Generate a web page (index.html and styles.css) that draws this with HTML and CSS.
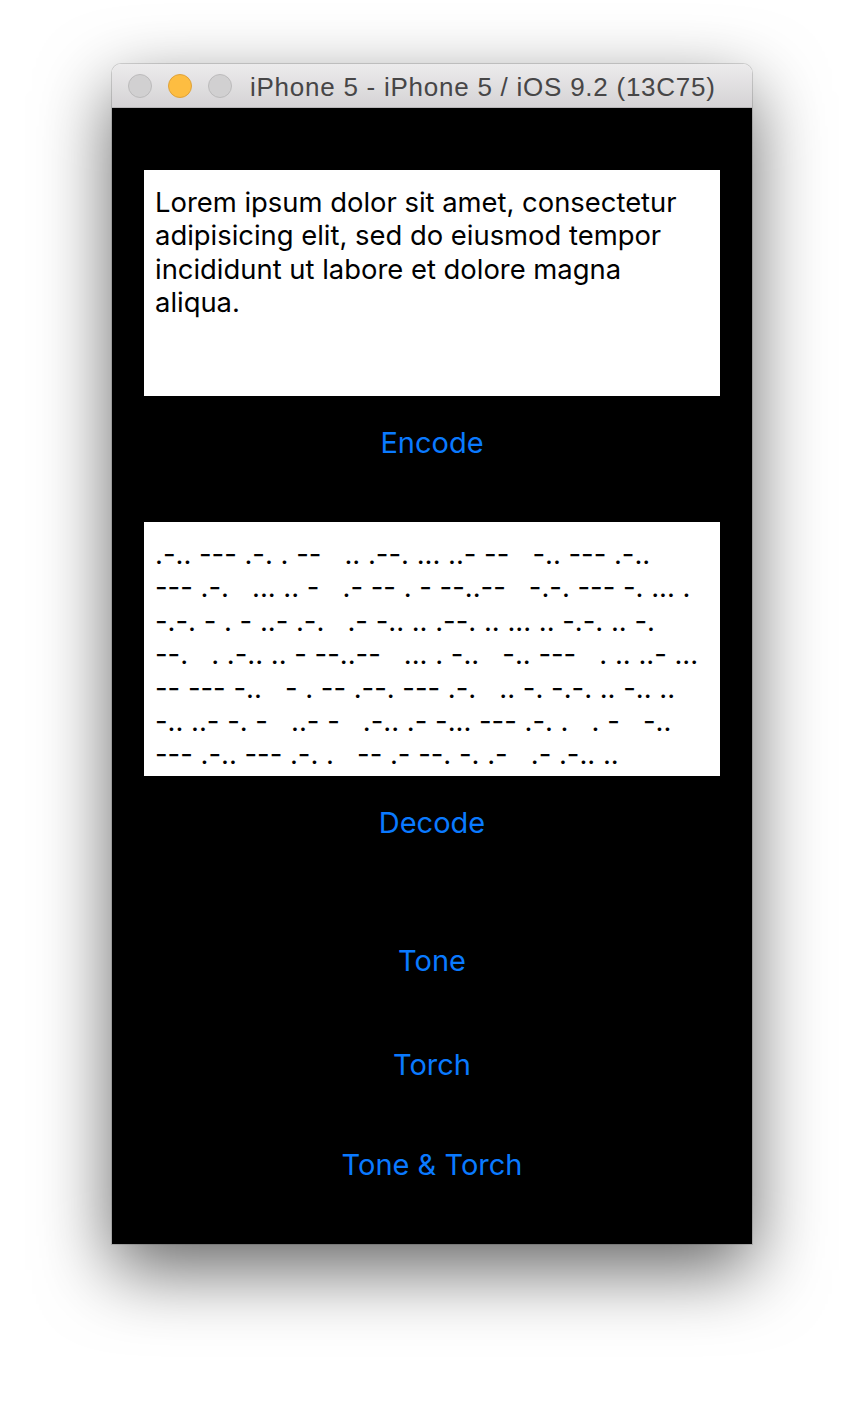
FILE: index.html
```html
<!DOCTYPE html>
<html lang="en">
<head>
<meta charset="utf-8">
<title>iPhone 5 - iPhone 5 / iOS 9.2 (13C75)</title>
<link rel="stylesheet" href="styles.css">
</head>
<body>
<div class="stage">
  <div class="window">
    <div class="titlebar">
      <div class="lights">
        <span class="light light-gray"></span>
        <span class="light light-yellow"></span>
        <span class="light light-gray"></span>
      </div>
      <div class="title">iPhone 5 - iPhone 5 / iOS 9.2 (13C75)</div>
    </div>
    <div class="screen">
      <div class="textview plain">Lorem ipsum dolor sit amet, consectetur<br>adipisicing elit, sed do eiusmod tempor<br>incididunt ut labore et dolore magna<br>aliqua.</div>
      <div class="button btn-encode">Encode</div>
      <div class="textview morse">.-.. --- .-. . --   .. .--. ... ..- --   -.. --- .-..
--- .-.   ... .. -   .- -- . - --..--   -.-. --- -. ... .
-.-. - . - ..- .-.   .- -.. .. .--. .. ... .. -.-. .. -.
--.   . .-.. .. - --..--   ... . -..   -.. ---   . .. ..- ...
-- --- -..   - . -- .--. --- .-.   .. -. -.-. .. -.. ..
-.. ..- -. -   ..- -   .-.. .- -... --- .-. .   . -   -..
--- .-.. --- .-. .   -- .- --. -. .-   .- .-.. ..</div>
      <div class="button btn-decode">Decode</div>
      <div class="button btn-tone">Tone</div>
      <div class="button btn-torch">Torch</div>
      <div class="button btn-both">Tone &amp; Torch</div>
    </div>
  </div>
</div>
</body>
</html>
```

FILE: styles.css
```css
html, body {
  margin: 0;
  padding: 0;
  background: #ffffff;
}
body {
  width: 864px;
  height: 1404px;
  overflow: hidden;
}
.stage {
  padding: 64px 0 0 112px;
}
.window {
  width: 640px;
  border-radius: 9px 9px 0 0;
  box-shadow: 0 26px 72px rgba(0, 0, 0, 0.6), 0 0 0 1px rgba(0, 0, 0, 0.14);
  overflow: hidden;
}
.titlebar {
  height: 44px;
  box-sizing: border-box;
  background: linear-gradient(#ecebec, #d5d3d5);
  border-bottom: 1px solid #b8b6b8;
  display: flex;
  align-items: center;
}
.lights {
  display: flex;
  gap: 16px;
  padding-left: 16px;
}
.light {
  width: 24px;
  height: 24px;
  box-sizing: border-box;
  border-radius: 50%;
}
.light-gray {
  background: #d1d0d1;
  border: 1px solid #bcbbbc;
}
.light-yellow {
  background: #fdbd41;
  border: 1px solid #dfa23a;
}
.title {
  margin-left: 18px;
  padding-top: 3px;
  font-family: "Liberation Sans", Arial, sans-serif;
  font-size: 26px;
  letter-spacing: 0.75px;
  color: #474647;
  white-space: nowrap;
}
.screen {
  height: 1136px;
  background: #000;
  padding-top: 62px;
  box-sizing: border-box;
  display: flex;
  flex-direction: column;
}
.textview {
  margin: 0 32px;
  background: #fff;
  color: #000;
  font-family: Inter, "Noto Sans", sans-serif;
  font-size: 27.4px;
  line-height: 33.4px;
  padding: 16px 10px 0 11px;
  box-sizing: border-box;
  overflow: hidden;
}
.plain {
  height: 226px;
}
.morse {
  height: 254px;
  white-space: pre;
}
.button {
  font-family: Inter, "Noto Sans", sans-serif;
  font-size: 29px;
  color: #0a7aff;
  text-align: center;
  height: 40px;
  line-height: 40px;
}
.btn-encode {
  margin: 27px 0 59px;
}
.btn-decode {
  margin-top: 27px;
}
.btn-tone {
  margin-top: 98px;
}
.btn-torch {
  margin-top: 64px;
}
.btn-both {
  margin-top: 60px;
}
```
